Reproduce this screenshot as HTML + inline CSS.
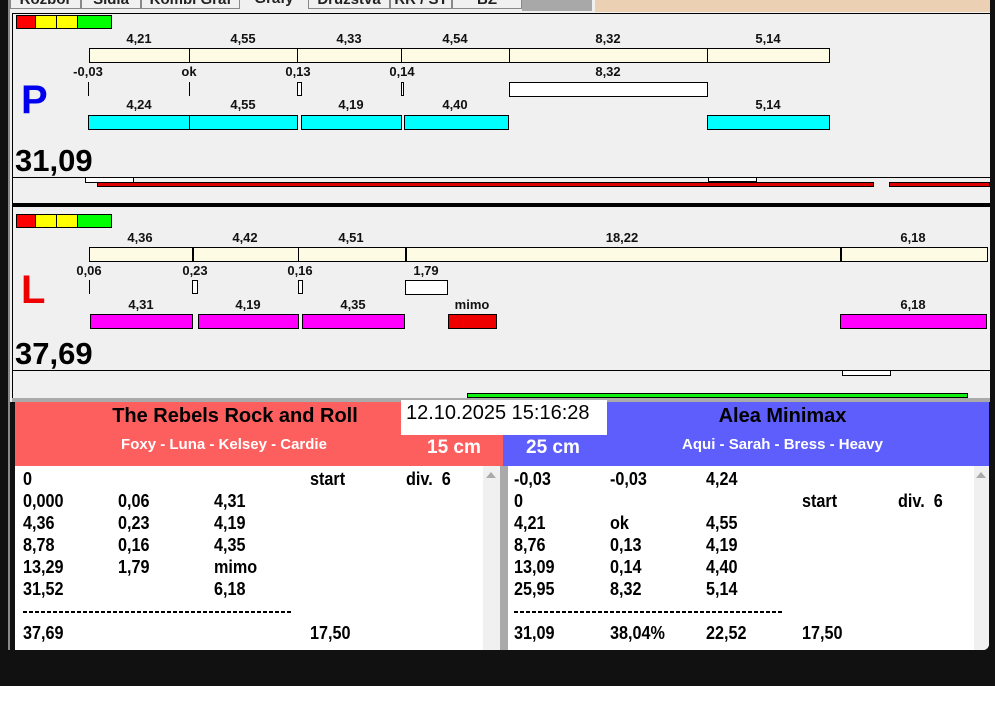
<!DOCTYPE html>
<html><head><meta charset="utf-8"><style>
*{margin:0;padding:0;box-sizing:border-box}
body{width:995px;height:716px;background:#fff;position:relative;overflow:hidden;font-family:"Liberation Sans",Arial,sans-serif}
.a{position:absolute}
.b{position:absolute;border:1px solid #000}
.t{position:absolute;font-weight:bold;font-size:13px;color:#111;transform:translateX(-50%);white-space:nowrap}
.r{position:absolute;font-weight:bold;font-size:18px;color:#000;white-space:nowrap;transform:scaleX(.9);transform-origin:left}
.tab{position:absolute;top:-9px;height:18px;border:1px solid #888;background:#f0f0f0;font-size:15px;font-weight:bold;text-align:center;overflow:hidden;line-height:16px;color:#222}
.d{position:absolute;height:2px;background:repeating-linear-gradient(90deg,#000 0 4px,transparent 4px 6px)}
</style></head><body>
<div class="a" style="left:0;top:0;width:995px;height:686px;background:#111"></div>
<div class="a" style="left:8px;top:0;width:982px;height:12px;background:#f0f0f0"></div>
<div class="tab" style="left:10px;width:71px">Rozbor</div>
<div class="tab" style="left:81px;width:60px">Sidla</div>
<div class="tab" style="left:141px;width:99px">Kombi Graf</div>
<div class="tab" style="left:240px;width:68px;border:none">Grafy</div>
<div class="tab" style="left:308px;width:82px">Družstva</div>
<div class="tab" style="left:390px;width:62px">RR / ST</div>
<div class="tab" style="left:452px;width:70px">BZ</div>
<div class="a" style="left:522px;top:0;width:70px;height:11px;background:#a8a8a8"></div>
<div class="a" style="left:595px;top:0;width:395px;height:12px;background:#ecd0b4"></div>
<div class="a" style="left:10px;top:12px;width:980px;height:390px;background:#f0f0f0"></div>
<div class="a" style="left:12px;top:13px;width:978px;height:1px;background:#000"></div>
<div class="a" style="left:12px;top:13px;width:1px;height:390px;background:#000"></div>
<div class="a" style="left:8px;top:0;width:2px;height:650px;background:#888"></div>

<div class="a" style="left:16px;top:15px;width:20px;height:14px;background:#f00;border:1px solid #000"></div>
<div class="a" style="left:36px;top:15px;width:21px;height:14px;background:#ff0;border:1px solid #000;border-left:none"></div>
<div class="a" style="left:57px;top:15px;width:21px;height:14px;background:#ff0;border:1px solid #000;border-left:none"></div>
<div class="a" style="left:78px;top:15px;width:34px;height:14px;background:#0f0;border:1px solid #000;border-left:none"></div>

<div class="t" style="left:139px;top:31px">4,21</div><div class="t" style="left:243px;top:31px">4,55</div><div class="t" style="left:349px;top:31px">4,33</div><div class="t" style="left:455px;top:31px">4,54</div><div class="t" style="left:608px;top:31px">8,32</div><div class="t" style="left:768px;top:31px">5,14</div>
<div class="b" style="left:89px;top:48px;width:741px;height:15px;background:#fdfbe3"></div>
<div class="a" style="left:189px;top:48px;width:1px;height:15px;background:#000"></div><div class="a" style="left:297px;top:48px;width:1px;height:15px;background:#000"></div><div class="a" style="left:401px;top:48px;width:1px;height:15px;background:#000"></div><div class="a" style="left:509px;top:48px;width:1px;height:15px;background:#000"></div><div class="a" style="left:707px;top:48px;width:1px;height:15px;background:#000"></div>
<div class="t" style="left:88px;top:64px">-0,03</div><div class="t" style="left:189px;top:64px">ok</div><div class="t" style="left:298px;top:64px">0,13</div><div class="t" style="left:402px;top:64px">0,14</div><div class="t" style="left:608px;top:64px">8,32</div>
<div class="a" style="left:88px;top:82px;width:1px;height:14px;background:#000"></div><div class="a" style="left:189px;top:82px;width:1px;height:14px;background:#000"></div>
<div class="b" style="left:297px;top:82px;width:5px;height:14px;background:#fff"></div><div class="b" style="left:401px;top:82px;width:3px;height:14px;background:#fff"></div>
<div class="b" style="left:509px;top:82px;width:199px;height:15px;background:#fff"></div>
<div class="a" style="left:21px;top:78px;font-size:40px;font-weight:bold;color:#0000ee">P</div>
<div class="t" style="left:139px;top:97px">4,24</div><div class="t" style="left:243px;top:97px">4,55</div><div class="t" style="left:351px;top:97px">4,19</div><div class="t" style="left:455px;top:97px">4,40</div><div class="t" style="left:768px;top:97px">5,14</div>
<div class="b" style="left:88px;top:115px;width:102px;height:15px;background:#0ff"></div><div class="b" style="left:189px;top:115px;width:109px;height:15px;background:#0ff"></div><div class="b" style="left:301px;top:115px;width:101px;height:15px;background:#0ff"></div><div class="b" style="left:404px;top:115px;width:105px;height:15px;background:#0ff"></div><div class="b" style="left:707px;top:115px;width:123px;height:15px;background:#0ff"></div>
<div class="a" style="left:15px;top:143px;font-size:31px;font-weight:bold;color:#000">31,09</div>
<div class="a" style="left:13px;top:177px;width:977px;height:1px;background:#000"></div>
<div class="b" style="left:85px;top:177px;width:49px;height:6px;background:#fff"></div>
<div class="b" style="left:708px;top:177px;width:49px;height:5px;background:#fff"></div>
<div class="b" style="left:97px;top:182px;width:777px;height:5px;background:#d00"></div>
<div class="b" style="left:889px;top:182px;width:101px;height:5px;background:#d00"></div>
<div class="a" style="left:12px;top:203px;width:978px;height:4px;background:#000"></div>

<div class="a" style="left:16px;top:214px;width:20px;height:14px;background:#f00;border:1px solid #000"></div>
<div class="a" style="left:36px;top:214px;width:21px;height:14px;background:#ff0;border:1px solid #000;border-left:none"></div>
<div class="a" style="left:57px;top:214px;width:21px;height:14px;background:#ff0;border:1px solid #000;border-left:none"></div>
<div class="a" style="left:78px;top:214px;width:34px;height:14px;background:#0f0;border:1px solid #000;border-left:none"></div>
<div class="t" style="left:140px;top:230px">4,36</div><div class="t" style="left:245px;top:230px">4,42</div><div class="t" style="left:351px;top:230px">4,51</div><div class="t" style="left:622px;top:230px">18,22</div><div class="t" style="left:913px;top:230px">6,18</div>
<div class="b" style="left:89px;top:247px;width:899px;height:15px;background:#fdfbe3"></div>
<div class="a" style="left:192px;top:247px;width:2px;height:15px;background:#000"></div><div class="a" style="left:298px;top:247px;width:1px;height:15px;background:#000"></div><div class="a" style="left:405px;top:247px;width:2px;height:15px;background:#000"></div><div class="a" style="left:840px;top:247px;width:2px;height:15px;background:#000"></div>
<div class="t" style="left:89px;top:263px">0,06</div><div class="t" style="left:195px;top:263px">0,23</div><div class="t" style="left:300px;top:263px">0,16</div><div class="t" style="left:426px;top:263px">1,79</div>
<div class="a" style="left:89px;top:280px;width:1px;height:14px;background:#000"></div>
<div class="b" style="left:192px;top:280px;width:6px;height:14px;background:#fff"></div><div class="b" style="left:298px;top:280px;width:5px;height:14px;background:#fff"></div>
<div class="b" style="left:405px;top:280px;width:43px;height:15px;background:#fff"></div>
<div class="a" style="left:21px;top:268px;font-size:40px;font-weight:bold;color:#ee0000">L</div>
<div class="t" style="left:141px;top:297px">4,31</div><div class="t" style="left:248px;top:297px">4,19</div><div class="t" style="left:353px;top:297px">4,35</div><div class="t" style="left:472px;top:297px">mimo</div><div class="t" style="left:913px;top:297px">6,18</div>
<div class="b" style="left:90px;top:314px;width:103px;height:15px;background:#f0f"></div><div class="b" style="left:198px;top:314px;width:101px;height:15px;background:#f0f"></div><div class="b" style="left:302px;top:314px;width:103px;height:15px;background:#f0f"></div><div class="b" style="left:448px;top:314px;width:49px;height:15px;background:#e00"></div><div class="b" style="left:840px;top:314px;width:147px;height:15px;background:#f0f"></div>
<div class="a" style="left:15px;top:336px;font-size:31px;font-weight:bold;color:#000">37,69</div>
<div class="a" style="left:13px;top:370px;width:977px;height:1px;background:#000"></div>
<div class="b" style="left:842px;top:370px;width:49px;height:6px;background:#fff"></div>
<div class="b" style="left:467px;top:393px;width:501px;height:5px;background:#1e1"></div>
<div class="a" style="left:12px;top:398px;width:978px;height:4px;background:#aaa"></div>

<div class="a" style="left:15px;top:402px;width:488px;height:64px;background:#fd5e5e"></div>
<div class="a" style="left:503px;top:402px;width:486px;height:64px;background:#5e5efd"></div>
<div class="a" style="left:15px;top:405px;width:440px;text-align:center;font-size:20px;font-weight:bold;color:#000">The Rebels Rock and Roll</div>
<div class="a" style="left:15px;top:436px;width:418px;text-align:center;font-size:15px;font-weight:bold;color:#fff">Foxy - Luna - Kelsey - Cardie</div>
<div class="a" style="left:427px;top:437px;font-size:19px;font-weight:bold;color:#fff">15 cm</div>
<div class="a" style="left:526px;top:437px;font-size:19px;font-weight:bold;color:#fff">25 cm</div>
<div class="a" style="left:575px;top:405px;width:415px;text-align:center;font-size:20px;font-weight:bold;color:#000">Alea Minimax</div>
<div class="a" style="left:575px;top:436px;width:415px;text-align:center;font-size:15px;font-weight:bold;color:#fff">Aqui - Sarah - Bress - Heavy</div>
<div class="a" style="left:401px;top:400px;width:206px;height:35px;background:#fff;font-size:20px;color:#000;padding:2px 0 0 5px">12.10.2025 15:16:28</div>

<div class="a" style="left:15px;top:466px;width:485px;height:184px;background:#fff"></div>
<div class="a" style="left:483px;top:466px;width:17px;height:184px;background:#f0f0f0"></div>
<div class="a" style="left:486px;top:472px;width:0;height:0;border:5px solid transparent;border-bottom:6px solid #aaa;border-top:none"></div>
<div class="a" style="left:500px;top:466px;width:8px;height:184px;background:#aaa"></div>
<div class="a" style="left:508px;top:466px;width:481px;height:184px;background:#fff;border-radius:0 0 6px 0"></div>
<div class="a" style="left:974px;top:466px;width:15px;height:184px;background:#f0f0f0;border-radius:0 0 6px 0"></div>
<div class="a" style="left:976px;top:472px;width:0;height:0;border:5px solid transparent;border-bottom:6px solid #aaa;border-top:none"></div>

<div class="r" style="left:23px;top:469px">0</div><div class="r" style="left:310px;top:469px">start</div><div class="r" style="left:406px;top:469px">div.&nbsp; 6</div>
<div class="r" style="left:23px;top:491px">0,000</div><div class="r" style="left:118px;top:491px">0,06</div><div class="r" style="left:214px;top:491px">4,31</div>
<div class="r" style="left:23px;top:513px">4,36</div><div class="r" style="left:118px;top:513px">0,23</div><div class="r" style="left:214px;top:513px">4,19</div>
<div class="r" style="left:23px;top:535px">8,78</div><div class="r" style="left:118px;top:535px">0,16</div><div class="r" style="left:214px;top:535px">4,35</div>
<div class="r" style="left:23px;top:557px">13,29</div><div class="r" style="left:118px;top:557px">1,79</div><div class="r" style="left:214px;top:557px">mimo</div>
<div class="r" style="left:23px;top:579px">31,52</div><div class="r" style="left:214px;top:579px">6,18</div>
<div class="d" style="left:23px;top:611px;width:269px"></div>
<div class="r" style="left:23px;top:623px">37,69</div><div class="r" style="left:310px;top:623px">17,50</div>

<div class="r" style="left:514px;top:469px">-0,03</div><div class="r" style="left:610px;top:469px">-0,03</div><div class="r" style="left:706px;top:469px">4,24</div>
<div class="r" style="left:514px;top:491px">0</div><div class="r" style="left:802px;top:491px">start</div><div class="r" style="left:898px;top:491px">div.&nbsp; 6</div>
<div class="r" style="left:514px;top:513px">4,21</div><div class="r" style="left:610px;top:513px">ok</div><div class="r" style="left:706px;top:513px">4,55</div>
<div class="r" style="left:514px;top:535px">8,76</div><div class="r" style="left:610px;top:535px">0,13</div><div class="r" style="left:706px;top:535px">4,19</div>
<div class="r" style="left:514px;top:557px">13,09</div><div class="r" style="left:610px;top:557px">0,14</div><div class="r" style="left:706px;top:557px">4,40</div>
<div class="r" style="left:514px;top:579px">25,95</div><div class="r" style="left:610px;top:579px">8,32</div><div class="r" style="left:706px;top:579px">5,14</div>
<div class="d" style="left:514px;top:611px;width:270px"></div>
<div class="r" style="left:514px;top:623px">31,09</div><div class="r" style="left:610px;top:623px">38,04%</div><div class="r" style="left:706px;top:623px">22,52</div><div class="r" style="left:802px;top:623px">17,50</div>
</body></html>
